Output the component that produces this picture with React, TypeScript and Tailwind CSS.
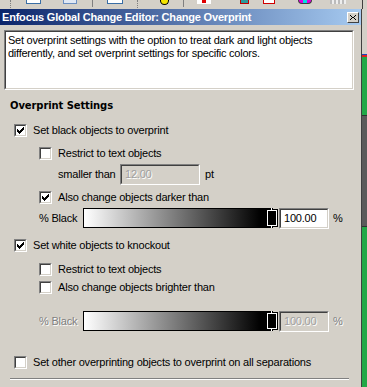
import React from "react";

const FONT = { fontFamily: '"Liberation Sans", Arial, sans-serif', letterSpacing: "-0.2px" };

function Check() {
  return (
    <svg width="7" height="7" viewBox="0 0 7 7" shapeRendering="crispEdges">
      <rect x="6" y="0" width="1" height="1" fill="#000" />
      <rect x="5" y="1" width="2" height="1" fill="#000" />
      <rect x="0" y="2" width="1" height="1" fill="#000" />
      <rect x="4" y="2" width="3" height="1" fill="#000" />
      <rect x="0" y="3" width="2" height="1" fill="#000" />
      <rect x="3" y="3" width="3" height="1" fill="#000" />
      <rect x="0" y="4" width="5" height="1" fill="#000" />
      <rect x="1" y="5" width="3" height="1" fill="#000" />
      <rect x="2" y="6" width="1" height="1" fill="#000" />
    </svg>
  );
}

function CB({ checked }: { checked?: boolean }) {
  return (
    <div className="w-[13px] h-[13px] shrink-0 border border-t-[#808080] border-l-[#808080] border-b-white border-r-white">
      <div className="w-full h-full border border-t-[#404040] border-l-[#404040] border-b-[#d4d0c8] border-r-[#d4d0c8] bg-white flex items-center justify-center">
        {checked && <Check />}
      </div>
    </div>
  );
}

function Row({ checked, label, indent, mt }: { checked?: boolean; label: string; indent: string; mt: string }) {
  return (
    <div className={`flex items-center h-[13px] ${indent} ${mt}`}>
      <CB checked={checked} />
      <span className="ml-[6px] text-[11px] leading-none text-black whitespace-nowrap">{label}</span>
    </div>
  );
}

function Sunken({ children, className }: { children?: React.ReactNode; className: string }) {
  return (
    <div className={`shrink-0 border border-t-[#808080] border-l-[#808080] border-b-white border-r-white ${className}`}>
      <div className="w-full h-full border border-t-[#404040] border-l-[#404040] border-b-[#d4d0c8] border-r-[#d4d0c8] flex items-center">
        {children}
      </div>
    </div>
  );
}

function Slider({ disabled, mt }: { disabled?: boolean; mt: string }) {
  const shadow = disabled ? { textShadow: "1px 1px 0 #fff" } : undefined;
  return (
    <div className={`flex items-center h-[20px] ml-[39px] ${mt}`}>
      <span className={`w-[44px] text-[11px] leading-none whitespace-nowrap ${disabled ? "text-[#808080]" : "text-black"}`} style={shadow}>
        % Black
      </span>
      <div className="relative w-[190px] h-[20px] border border-black bg-[linear-gradient(to_right,#ffffff,#000000_94%)]">
        <div className="absolute right-[-5px] top-[1px] w-[10px] h-[16px] bg-black border border-white outline outline-1 outline-black"></div>
        <div className="absolute right-[0px] top-[-1px] w-[1px] h-[2px] bg-white"></div>
        <div className="absolute right-[0px] bottom-[-1px] w-[1px] h-[2px] bg-white"></div>
      </div>
      <Sunken className={`ml-[6px] w-[50px] h-[21px] ${disabled ? "bg-[#d4d0c8]" : "bg-white"}`}>
        <span className={`ml-[3px] text-[11px] leading-none ${disabled ? "text-[#a0a0a0]" : "text-black"}`} style={shadow}>
          100.00
        </span>
      </Sunken>
      <span className={`ml-[4px] text-[11px] leading-none ${disabled ? "text-[#808080]" : "text-black"}`} style={shadow}>
        %
      </span>
    </div>
  );
}

function Toolbar() {
  return (
    <div className="h-[9px] flex items-start bg-[#d4d0c8] relative overflow-hidden">
      <div className="absolute left-[10px] top-0 w-[1px] h-[8px] border-l border-dotted border-[#808080]"></div>
      <div className="absolute left-[26px] top-0 w-[15px] h-[4px] border border-t-0 border-[#3a6ea5] bg-white"></div>
      <div className="absolute left-[63px] top-0 w-[14px] h-[4px] border border-t-0 border-[#6b8ec0] bg-[#e0e8f4]"></div>
      <div className="absolute left-[92px] top-0 w-[1px] h-[7px] bg-[#808080]"></div>
      <div className="absolute left-[107px] top-0 w-[16px] h-[4px] border border-t-0 border-[#3a6ea5] bg-white"></div>
      <div className="absolute left-[137px] top-0 w-[1px] h-[8px] border-l border-dotted border-[#808080]"></div>
      <div className="absolute left-[160px] top-[0px] w-[9px] h-[5px] rounded-b-full bg-[#f5e400] border border-t-0 border-black"></div>
      <div className="absolute left-[183px] top-0 w-[1px] h-[7px] bg-[#808080]"></div>
      <div className="absolute left-[197px] top-0 w-[14px] h-[4px] bg-white"></div>
      <div className="absolute left-[202px] top-0 w-[4px] h-[3px] bg-[#e00000]"></div>
      <div className="absolute left-[240px] top-0 w-[9px] h-[4px] bg-[#2a9a9a] border border-t-0 border-[#c00000]"></div>
      <div className="absolute left-[263px] top-0 w-[12px] h-[4px] bg-white border border-t-0 border-[#d00000]"></div>
      <div className="absolute left-[298px] top-0 w-[14px] h-[4px] rounded-b-full bg-[#e000e0] border border-t-0 border-[#404040]"></div>
      <div className="absolute left-[303px] top-0 w-[4px] h-[3px] bg-[#00e0e0]"></div>
      <div className="absolute left-[330px] top-0 w-[16px] h-[4px] bg-[repeating-linear-gradient(90deg,#bbb_0,#bbb_2px,#eee_2px,#eee_4px)]"></div>
      <div className="absolute left-[362px] top-0 w-[1px] h-[9px] bg-[#404040]"></div>
    </div>
  );
}

export default function App() {
  return (
    <div className="w-[367px] h-[387px] bg-[#d4d0c8] flex flex-col overflow-hidden" style={FONT}>
      <Toolbar />
      <div className="flex flex-1">
        <div className="w-[361px] flex flex-col">
          <div className="h-[16px] flex items-center bg-[linear-gradient(to_right,#0a246a,#a6caf0)] relative">
            <span className="ml-[2px] text-white font-bold text-[11px] leading-none whitespace-nowrap">
              Enfocus Global Change Editor: Change Overprint
            </span>
            <div className="ml-auto mr-[2px] w-[12px] h-[11px] bg-[#d4d0c8] border border-t-white border-l-white border-b-[#404040] border-r-[#404040] flex items-center justify-center">
              <svg width="6" height="5" viewBox="0 0 6 5" shapeRendering="crispEdges">
                <path d="M0 0h1v1h-1zM5 0h1v1h-1zM1 1h1v1h-1zM4 1h1v1h-1zM2 2h2v1h-2zM1 3h1v1h-1zM4 3h1v1h-1zM0 4h1v1h-1zM5 4h1v1h-1z" fill="#000" />
              </svg>
            </div>
          </div>
          <Sunken className="mt-[5px] ml-[4px] w-[350px] h-[60px] bg-white">
            <div className="self-start pl-[2px] pt-[2px] text-[11px] leading-[13px] text-black tracking-[-0.25px]">
              Set overprint settings with the option to treat dark and light objects
              <br />
              differently, and set overprint settings for specific colors.
            </div>
          </Sunken>

          <div className="mt-[9px] ml-[10px] h-[14px] flex items-center">
            <span className="font-bold leading-none text-black" style={{ fontFamily: '"DejaVu Sans", sans-serif', fontSize: "10px", letterSpacing: "-0.1px" }}>
              Overprint Settings
            </span>
          </div>

          <Row checked label="Set black objects to overprint" indent="ml-[14px]" mt="mt-[11px]" />
          <Row label="Restrict to text objects" indent="ml-[39px]" mt="mt-[10px]" />
          <div className="mt-[4px] ml-[58px] h-[21px] flex items-center">
            <span className="w-[62px] text-[11px] leading-none text-black whitespace-nowrap">smaller than</span>
            <Sunken className="w-[80px] h-[21px] bg-[#d4d0c8]">
              <span className="ml-[3px] text-[11px] leading-none text-[#a0a0a0]" style={{ textShadow: "1px 1px 0 #fff" }}>
                12.00
              </span>
            </Sunken>
            <span className="ml-[5px] text-[11px] leading-none text-black">pt</span>
          </div>
          <Row checked label="Also change objects darker than" indent="ml-[39px]" mt="mt-[6px]" />
          <Slider mt="mt-[4px]" />
          <Row checked label="Set white objects to knockout" indent="ml-[14px]" mt="mt-[11px]" />
          <Row label="Restrict to text objects" indent="ml-[39px]" mt="mt-[11px]" />
          <Row label="Also change objects brighter than" indent="ml-[39px]" mt="mt-[5px]" />
          <Slider disabled mt="mt-[17px]" />
          <Row label="Set other overprinting objects to overprint on all separations" indent="ml-[14px]" mt="mt-[25px]" />
          <div className="mt-[9px] ml-[10px] w-[339px] h-[2px] border-t border-t-[#808080] border-b border-b-white"></div>
        </div>
        <div className="w-[1px] bg-[#404040]"></div>
        <div className="flex-1 flex flex-col">
          <div className="h-[45px] bg-[#d4d0c8]"></div>
          <div className="h-[1px] bg-[#2040c0]"></div>
          <div className="h-[2px] bg-[#e02020]"></div>
          <div className="h-[58px] bg-[#22a847]"></div>
          <div className="h-[112px] bg-[#5a5a5a] border-y border-[#303030]"></div>
          <div className="flex-1 bg-[#22a847]"></div>
        </div>
      </div>
    </div>
  );
}
